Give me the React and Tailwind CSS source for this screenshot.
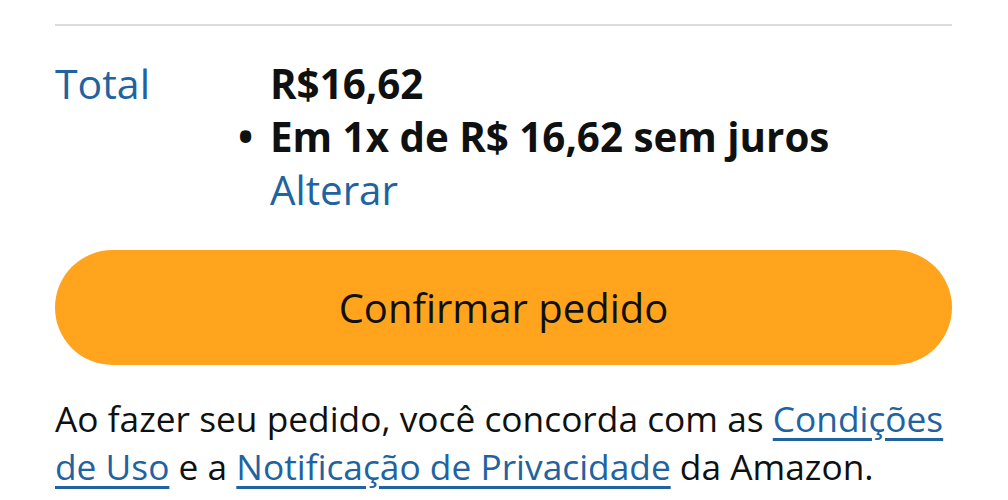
export default function App() {
  return (
    <div
      className="w-[1008px] h-[500px] bg-white overflow-hidden pl-[55px] pr-[56px] pt-[24px] text-[#0f1111]"
      style={{ fontFamily: '"Open Sans", "Noto Sans", sans-serif' }}
    >
      <div className="h-[2px] bg-[#dddddd]" />
      <div className="flex mt-[31px]">
        <div className="w-[215px] text-[41px] leading-[53px] text-[#2162a1]">Total</div>
        <div className="flex flex-col text-[40.3px] leading-[53px]">
          <div className="font-bold">R$16,62</div>
          <div className="flex -ml-[32px] font-bold">
            <span className="w-[32px]">•</span>
            <span>Em 1x de R$ 16,62 sem juros</span>
          </div>
          <a className="text-[#2162a1]">Alterar</a>
        </div>
      </div>
      <button className="mt-[34px] w-full h-[115px] rounded-full bg-[#ffa41c] text-[40px] text-[#0f1111] flex items-center justify-center">
        Confirmar pedido
      </button>
      <p className="mt-[29px] text-[35.3px] leading-[48px]">
        Ao fazer seu pedido, você concorda com as{" "}
        <a className="text-[#2162a1] underline decoration-[3px] underline-offset-[6px]">Condições</a>{" "}
        <a className="text-[#2162a1] underline decoration-[3px] underline-offset-[6px]">de Uso</a> e a{" "}
        <a className="text-[#2162a1] underline decoration-[3px] underline-offset-[6px]">Notificação de Privacidade</a> da Amazon.
      </p>
    </div>
  );
}
